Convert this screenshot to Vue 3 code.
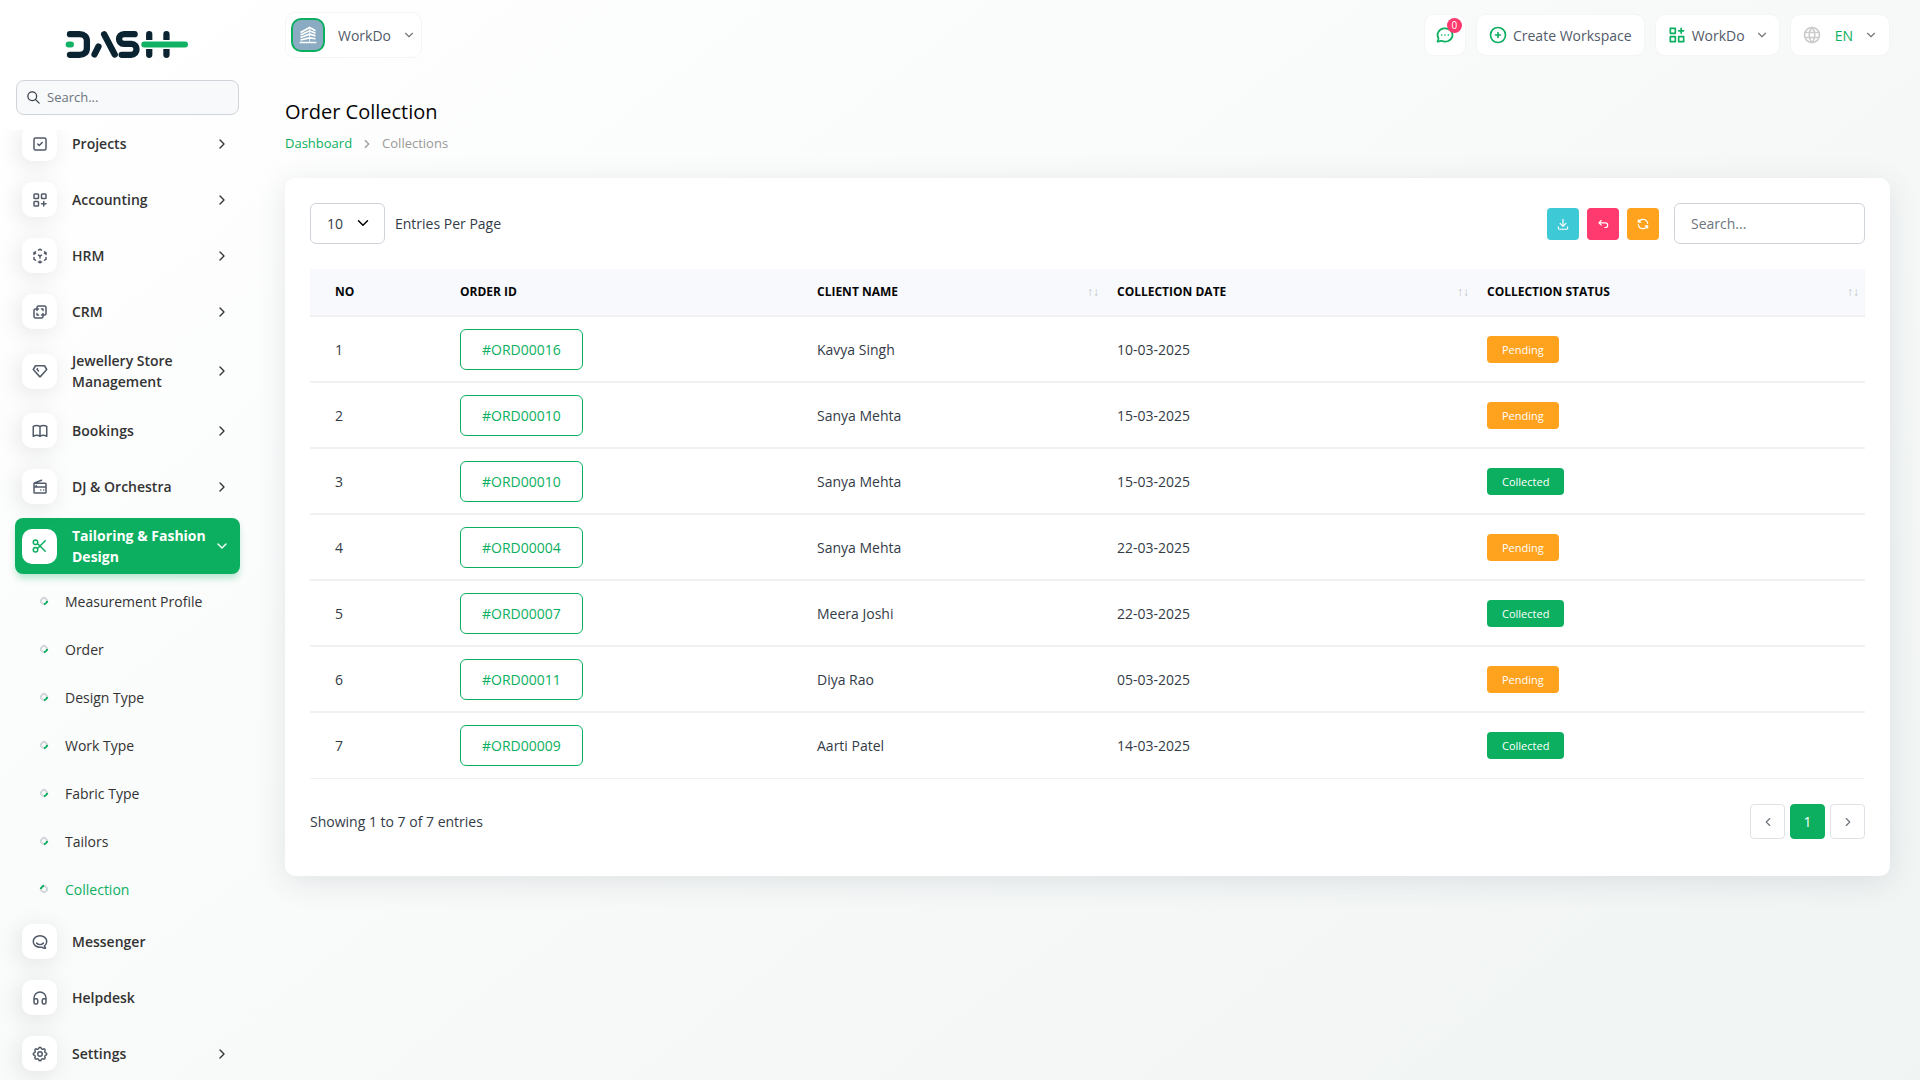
<script setup>
import { ref } from 'vue'

const paths = {
  check: 'M6 4h12a2 2 0 0 1 2 2v12a2 2 0 0 1-2 2H6a2 2 0 0 1-2-2V6a2 2 0 0 1 2-2zM9 12l2 2l4-4',
  apps: 'M5 4h4a1 1 0 0 1 1 1v4a1 1 0 0 1-1 1H5a1 1 0 0 1-1-1V5a1 1 0 0 1 1-1zM15 4h4a1 1 0 0 1 1 1v4a1 1 0 0 1-1 1h-4a1 1 0 0 1-1-1V5a1 1 0 0 1 1-1zM5 14h4a1 1 0 0 1 1 1v4a1 1 0 0 1-1 1H5a1 1 0 0 1-1-1v-4a1 1 0 0 1 1-1zM14 17h6M17 14v6',
  grid: 'M4 4h6v6H4zM4 14h6v6H4zM14 14h6v6h-6zM14 7h6M17 4v6',
  cube: 'M6 17.6l-2-1.1V14M4 10V7.5l2-1.1M10 4.1L12 3l2 1.1M18 6.4l2 1.1V10M20 14v2.5l-2 1.12M14 19.9L12 21l-2-1.1M12 12l2-1.1M18 8.6l2-1.1M12 12v2.5M12 18.5V21M12 12l-2-1.12M6 8.6L4 7.5',
  layers: 'M16 16v2a2 2 0 0 1-2 2H6a2 2 0 0 1-2-2v-8a2 2 0 0 1 2-2h2V6a2 2 0 0 1 2-2h8a2 2 0 0 1 2 2v8a2 2 0 0 1-2 2h-2M10 8H8v2M8 14v2h2M14 8h2v2M16 14v2h-2',
  diamond: 'M6 5h12l3 5l-8.5 9.5a.7.7 0 0 1-1 0L3 10l3-5M10 12L8 9.8l.6-1',
  book: 'M3 19a9 9 0 0 1 9 0a9 9 0 0 1 9 0M3 6a9 9 0 0 1 9 0a9 9 0 0 1 9 0M3 6v13M12 6v13M21 6v13',
  radio: 'M14 3L4.629 6.749A1 1 0 0 0 4 7.677V19a1 1 0 0 0 1 1h14a1 1 0 0 0 1-1V8a1 1 0 0 0-1-1H4.5M4 12h16M7 12v-2M17 16v.01M13 16v.01',
  cut: 'M9 7a3 3 0 1 1-6 0a3 3 0 0 1 6 0zM9 17a3 3 0 1 1-6 0a3 3 0 0 1 6 0zM8.6 8.6L19 19M8.6 15.4L19 5',
  chat: 'M17.802 17.292s.077-.055.2-.149c1.843-1.425 3-3.49 3-5.789c0-4.286-4.03-7.764-9-7.764s-9 3.478-9 7.764c0 4.288 4.03 7.646 9 7.646c.424 0 1.12-.028 2.088-.084c1.262.82 3.104 1.493 4.716 1.493c.499 0 .734-.41.414-.828c-.486-.596-1.156-1.551-1.416-2.29zM7.5 13.5c2.5 2.5 6.5 2.5 9 0',
  headphones: 'M6 13h1a2 2 0 0 1 2 2v3a2 2 0 0 1-2 2H6a2 2 0 0 1-2-2v-3a2 2 0 0 1 2-2zM17 13h1a2 2 0 0 1 2 2v3a2 2 0 0 1-2 2h-1a2 2 0 0 1-2-2v-3a2 2 0 0 1 2-2zM4 15v-3a8 8 0 0 1 16 0v3',
  gear: 'M10.325 4.317c.426-1.756 2.924-1.756 3.35 0a1.724 1.724 0 0 0 2.573 1.066c1.543-.94 3.31.826 2.37 2.37a1.724 1.724 0 0 0 1.065 2.572c1.756.426 1.756 2.924 0 3.35a1.724 1.724 0 0 0-1.066 2.573c.94 1.543-.826 3.31-2.37 2.37a1.724 1.724 0 0 0-2.572 1.065c-.426 1.756-2.924 1.756-3.35 0a1.724 1.724 0 0 0-2.573-1.066c-1.543.94-3.31-.826-2.37-2.37a1.724 1.724 0 0 0-1.065-2.572c-1.756-.426-1.756-2.924 0-3.35a1.724 1.724 0 0 0 1.066-2.573c-.94-1.543.826-3.31 2.37-2.37c1 .608 2.296.07 2.572-1.065zM15 12a3 3 0 1 1-6 0a3 3 0 0 1 6 0z',
  message: 'M3 20l1.3-3.9a9 8 0 1 1 3.4 2.9L3 20M12 12v.01M8 12v.01M16 12v.01',
  plus: 'M21 12a9 9 0 1 1-18 0a9 9 0 0 1 18 0zM9 12h6M12 9v6',
  world: 'M21 12a9 9 0 1 1-18 0a9 9 0 0 1 18 0zM3.6 9h16.8M3.6 15h16.8M11.5 3a17 17 0 0 0 0 18M12.5 3a17 17 0 0 1 0 18',
  download: 'M4 17v2a2 2 0 0 0 2 2h12a2 2 0 0 0 2-2v-2M7 11l5 5l5-5M12 4v12',
  back: 'M9 14l-4-4l4-4M5 10h11a4 4 0 1 1 0 8h-1',
  refresh: 'M20 11A8.1 8.1 0 0 0 4.5 9M4 5v4h4zM4 13a8.1 8.1 0 0 0 15.5 2M20 19v-4h-4z',
  right: 'M9 6l6 6l-6 6',
  left: 'M15 6l-6 6l6 6',
  down: 'M6 9l6 6l6-6',
  search: 'M17 10a7 7 0 1 1-14 0a7 7 0 0 1 14 0zM21 21l-6-6',
}

const menu = [
  { label: 'Projects', icon: 'check', more: true },
  { label: 'Accounting', icon: 'apps', more: true },
  { label: 'HRM', icon: 'cube', more: true },
  { label: 'CRM', icon: 'layers', more: true },
  { label: 'Jewellery Store Management', icon: 'diamond', more: true },
  { label: 'Bookings', icon: 'book', more: true },
  { label: 'DJ & Orchestra', icon: 'radio', more: true },
  {
    label: 'Tailoring & Fashion Design', icon: 'cut', open: true,
    children: ['Measurement Profile', 'Order', 'Design Type', 'Work Type', 'Fabric Type', 'Tailors', 'Collection'],
  },
  { label: 'Messenger', icon: 'chat' },
  { label: 'Helpdesk', icon: 'headphones' },
  { label: 'Settings', icon: 'gear', more: true },
]

const columns = [
  { label: 'No', cls: 'col-no' },
  { label: 'Order ID', cls: 'col-id' },
  { label: 'Client Name', cls: 'col-client', sort: true },
  { label: 'Collection Date', cls: 'col-date', sort: true },
  { label: 'Collection Status', cls: 'col-status', sort: true },
]

const rows = [
  ['#ORD00016', 'Kavya Singh', '10-03-2025', 'Pending'],
  ['#ORD00010', 'Sanya Mehta', '15-03-2025', 'Pending'],
  ['#ORD00010', 'Sanya Mehta', '15-03-2025', 'Collected'],
  ['#ORD00004', 'Sanya Mehta', '22-03-2025', 'Pending'],
  ['#ORD00007', 'Meera Joshi', '22-03-2025', 'Collected'],
  ['#ORD00011', 'Diya Rao', '05-03-2025', 'Pending'],
  ['#ORD00009', 'Aarti Patel', '14-03-2025', 'Collected'],
]

const perPage = ref('10')
</script>

<template>
  <div class="app">
    <aside class="sidebar">
      <a href="#" class="logo" aria-label="Dash">
        <svg viewBox="196 92 374 86" width="124" height="29" fill="none" stroke-linecap="round" stroke-linejoin="round">
          <g stroke="#0b2432" stroke-width="19">
            <path d="M211 104H240C254 104 262 112 262 124V146C262 158 254 166 240 166H211" />
            <path d="M285 165L297 141M314 104L346 165" />
            <path d="M406 104H374C354 104 354 133 374 133H396C417 133 417 166 396 166H367" />
            <path d="M450 104V166M502 104V166" />
          </g>
          <path d="M440 135H516" stroke="#fff" stroke-width="27" stroke-linecap="butt" />
          <path d="M207 135H214M435 135H558" stroke="#12b264" stroke-width="18" />
        </svg>
      </a>
      <label class="side-search">
        <svg class="icon" viewBox="0 0 24 24" width="15" height="15"><path :d="paths.search" /></svg>
        <input type="text" placeholder="Search..." aria-label="Search menu" />
      </label>
      <nav class="menu">
        <ul class="menu-list">
          <li v-for="item in menu" :key="item.label">
            <a href="#" class="menu-link" :class="{ active: item.open }">
              <span class="menu-icon">
                <svg class="icon" viewBox="0 0 24 24" width="18" height="18"><path :d="paths[item.icon]" /></svg>
              </span>
              <span class="menu-label">{{ item.label }}</span>
              <svg v-if="item.more || item.open" class="icon arrow" viewBox="0 0 24 24" width="16" height="16">
                <path :d="item.open ? paths.down : paths.right" />
              </svg>
            </a>
            <ul v-if="item.children" class="submenu">
              <li v-for="child in item.children" :key="child">
                <a href="#" class="sub-link" :class="{ current: child === 'Collection' }"><i class="bullet"></i>{{ child }}</a>
              </li>
            </ul>
          </li>
        </ul>
      </nav>
    </aside>

    <main class="main">
      <header class="topbar">
        <button type="button" class="chip workspace">
          <span class="avatar">
            <svg viewBox="0 0 24 24" width="20" height="20" fill="none" stroke="#fff" stroke-width="2">
              <path d="M3 9L14 3L21 7M3 12L14 7L21 10M3 15L14 11L21 13M3 18L14 15.500L21 16.500M2 21H22" />
              <path d="M14 3V20" stroke-width="1" />
            </svg>
          </span>
          WorkDo
          <svg class="icon chevron" viewBox="0 0 24 24" width="14" height="14"><path :d="paths.down" /></svg>
        </button>
        <div class="actions">
          <button type="button" class="chip messages" aria-label="Messages">
            <svg class="icon green" viewBox="0 0 24 24" width="20" height="20"><path :d="paths.message" /></svg>
            <span class="count">0</span>
          </button>
          <button type="button" class="chip create">
            <svg class="icon green" viewBox="0 0 24 24" width="20" height="20"><path :d="paths.plus" /></svg>
            Create Workspace
          </button>
          <button type="button" class="chip switcher">
            <svg class="icon green" viewBox="0 0 24 24" width="20" height="20"><path :d="paths.grid" /></svg>
            WorkDo
            <svg class="icon chevron" viewBox="0 0 24 24" width="14" height="14"><path :d="paths.down" /></svg>
          </button>
          <button type="button" class="chip lang">
            <svg class="icon globe" viewBox="0 0 24 24" width="20" height="20"><path :d="paths.world" /></svg>
            EN
            <svg class="icon chevron" viewBox="0 0 24 24" width="14" height="14"><path :d="paths.down" /></svg>
          </button>
        </div>
      </header>

      <h1 class="title">Order Collection</h1>
      <nav class="crumbs">
        <a href="#">Dashboard</a>
        <svg class="icon" viewBox="0 0 24 24" width="14" height="14"><path :d="paths.right" /></svg>
        <span>Collections</span>
      </nav>

      <section class="card">
        <div class="toolbar">
          <label class="per-page">
            <span class="select-wrap">
              <select v-model="perPage">
                <option>10</option>
                <option>25</option>
                <option>50</option>
              </select>
              <svg class="icon" viewBox="0 0 24 24" width="18" height="18"><path :d="paths.down" /></svg>
            </span>
            Entries Per Page
          </label>
          <div class="tools">
            <button type="button" class="tool export" aria-label="Export">
              <svg class="icon" viewBox="0 0 24 24" width="14" height="14"><path :d="paths.download" /></svg>
            </button>
            <button type="button" class="tool reset" aria-label="Reset">
              <svg class="icon" viewBox="0 0 24 24" width="14" height="14"><path :d="paths.back" /></svg>
            </button>
            <button type="button" class="tool reload" aria-label="Reload">
              <svg class="icon" viewBox="0 0 24 24" width="14" height="14"><path :d="paths.refresh" /></svg>
            </button>
            <input class="search" type="text" placeholder="Search..." aria-label="Search orders" />
          </div>
        </div>

        <table class="orders">
          <thead>
            <tr>
              <th v-for="col in columns" :key="col.label" :class="col.cls" scope="col">
                <div class="th">{{ col.label }}<span v-if="col.sort" class="sort">↑↓</span></div>
              </th>
            </tr>
          </thead>
          <tbody>
            <tr v-for="(row, i) in rows" :key="i">
              <td>{{ i + 1 }}</td>
              <td><a href="#" class="order-id">{{ row[0] }}</a></td>
              <td>{{ row[1] }}</td>
              <td>{{ row[2] }}</td>
              <td><span class="badge" :class="row[3].toLowerCase()">{{ row[3] }}</span></td>
            </tr>
          </tbody>
        </table>

        <footer class="foot">
          <span>Showing 1 to 7 of 7 entries</span>
          <div class="pager">
            <button type="button" aria-label="Previous">
              <svg class="icon" viewBox="0 0 24 24" width="14" height="14"><path :d="paths.left" /></svg>
            </button>
            <button type="button" class="on">1</button>
            <button type="button" aria-label="Next">
              <svg class="icon" viewBox="0 0 24 24" width="14" height="14"><path :d="paths.right" /></svg>
            </button>
          </div>
        </footer>
      </section>
    </main>
  </div>
</template>

<style>
body {
  background: #fff;
}
</style>

<style scoped>
.app,
.app * {
  box-sizing: border-box;
}
.app {
  display: flex;
  height: 100vh;
  overflow: hidden;
  font: 14px/21px "Open Sans", "Noto Sans", sans-serif;
  color: #333b47;
  background: linear-gradient(142deg, #fff 3%, #f0f4f3 100%);
}
a {
  color: inherit;
  text-decoration: none;
}
ul {
  list-style: none;
  margin: 0;
  padding: 0;
}
button,
input,
select {
  font: inherit;
  color: inherit;
}
button {
  cursor: pointer;
}
.icon {
  display: block;
  flex: none;
  fill: none;
  stroke: currentColor;
  stroke-width: 2;
  stroke-linecap: round;
  stroke-linejoin: round;
}

.sidebar {
  flex: none;
  display: flex;
  flex-direction: column;
  width: 255px;
}
.logo {
  align-self: flex-start;
  margin: 30px 0 21px 65px;
  height: 29px;
}
.side-search {
  display: flex;
  align-items: center;
  gap: 6px;
  height: 35px;
  margin: 0 16px;
  padding: 0 9px;
  border: 1px solid #ced4da;
  border-radius: 8px;
  background: #f8f9fa;
}
.side-search input {
  flex: 1;
  min-width: 0;
  padding: 0;
  border: 0;
  outline: 0;
  background: none;
  font-size: 13px;
}
input::placeholder {
  color: #6c757d;
  opacity: 1;
}
.menu {
  flex: 1;
  min-height: 0;
  margin-top: 15px;
  overflow: hidden;
}
.menu-list {
  margin-top: -15px;
}
.menu-link {
  display: flex;
  align-items: center;
  margin: 0 15px;
  padding: 7px;
  border-radius: 8px;
  color: #333;
  font-weight: 600;
}
.menu-list > li {
  padding: 4px 0 3px;
}
.menu-icon {
  display: grid;
  place-items: center;
  flex: none;
  width: 35px;
  height: 35px;
  margin-right: 15px;
  border-radius: 10px;
  background: #fff;
  box-shadow: -3px 4px 23px rgba(0, 0, 0, 0.1);
  color: #525b69;
}
.menu-label {
  flex: 1;
}
.arrow {
  margin-right: 3px;
}
.menu-link.active {
  background: #0caf60;
  box-shadow: 0 5px 7px -1px rgba(12, 175, 96, 0.3);
  color: #fff;
  font-weight: 700;
}
.active .menu-icon {
  color: #0caf60;
  box-shadow: none;
}
.submenu {
  margin: 3px 0 -3px;
}
.sub-link {
  display: flex;
  align-items: center;
  height: 48px;
  padding-left: 40px;
  color: #333;
  font-weight: 500;
}
.bullet {
  width: 8px;
  height: 8px;
  margin-right: 17px;
  border: 2px solid #d2d6d9;
  border-right-color: #0caf60;
  border-radius: 50%;
  transform: rotate(45deg);
}
.current {
  color: #0caf60;
}
.current .bullet {
  transform: rotate(225deg);
}

.main {
  flex: 1;
  min-width: 0;
  padding: 12px 30px 0;
}
.topbar {
  display: flex;
  justify-content: space-between;
  align-items: center;
}
.chip {
  display: flex;
  align-items: center;
  height: 42px;
  padding: 0 10px;
  border: 1px solid #f4f6f6;
  border-radius: 10px;
  background: #fff;
  color: #525b69;
}
.workspace {
  height: 46px;
  padding: 0 5px;
}
.avatar {
  display: grid;
  place-items: center;
  width: 34px;
  height: 34px;
  margin-right: 13px;
  border: 2px solid #0caf60;
  border-radius: 10px;
  background: #8aabc2;
}
.chevron {
  margin-left: 11px;
  color: #777;
}
.actions {
  display: flex;
  gap: 10px;
}
.messages {
  position: relative;
}
.count {
  position: absolute;
  top: 3px;
  right: 3px;
  width: 15px;
  border-radius: 8px;
  background: #ff3a6e;
  color: #fff;
  font-size: 10px;
  line-height: 15px;
}
.green {
  color: #0caf60;
}
.create,
.switcher {
  gap: 5px;
}
.create {
  padding: 0 12px 0 11px;
}
.switcher {
  padding-left: 11px;
}
.switcher .chevron {
  margin-left: 5px;
}
.lang {
  padding: 0 11px;
  color: #0caf60;
}
.globe {
  margin-right: 13px;
  color: #ccc;
}
.title {
  margin: 39px 0 6px;
  color: #060606;
  font-size: 20px;
  font-weight: 500;
  line-height: 30px;
}
.crumbs {
  display: flex;
  align-items: center;
  gap: 8px;
  color: #999;
  font-size: 13px;
}
.crumbs a {
  color: #0caf60;
}
.card {
  margin-top: 24px;
  padding: 25px 25px 37px;
  border-radius: 10px;
  background: #fff;
  box-shadow: 0 6px 30px rgba(55, 65, 81, 0.12);
}
.toolbar {
  display: flex;
  justify-content: space-between;
  align-items: center;
  margin-bottom: 25px;
}
.per-page {
  display: flex;
  align-items: center;
  gap: 10px;
}
.select-wrap {
  position: relative;
}
select {
  display: block;
  width: 75px;
  height: 41px;
  padding: 0 16px;
  border: 1px solid #ced4da;
  border-radius: 6px;
  background: #fff;
  appearance: none;
}
.select-wrap .icon {
  position: absolute;
  top: 11px;
  right: 13px;
  color: #000;
  pointer-events: none;
}
.tools {
  display: flex;
  align-items: center;
  gap: 8px;
}
.tool {
  display: grid;
  place-items: center;
  width: 32px;
  height: 32px;
  padding: 0;
  border: 0;
  border-radius: 4px;
  color: #fff;
}
.export {
  background: #3ec9d6;
}
.reset {
  background: #ff3a6e;
}
.reload {
  background: #ffa21d;
}
.search {
  width: 191px;
  height: 41px;
  margin-left: 7px;
  padding: 0 16px;
  border: 1px solid #ced4da;
  border-radius: 6px;
  background: #fff;
}
.orders {
  width: 100%;
  border-collapse: separate;
  border-spacing: 0;
  table-layout: fixed;
}
.col-no {
  width: 138px;
}
.col-id {
  width: 357px;
}
.col-client {
  width: 300px;
}
.col-date {
  width: 370px;
}
.col-status {
  width: 390px;
}
th {
  height: 48px;
  padding: 0 6px 2px 12px;
  border-bottom: 2px solid #f1f1f1;
  background: #f8f9fd;
  color: #060606;
  font-size: 12px;
  font-weight: 700;
  text-align: left;
  text-transform: uppercase;
}
.th {
  display: flex;
  justify-content: space-between;
}
.sort {
  color: #c3c5c8;
  font-weight: 400;
}
td {
  height: 66px;
  padding: 0 12px;
  border-bottom: 2px solid #f1f1f1;
}
tbody tr:last-child td {
  border-bottom-width: 1px;
}
th:first-child,
td:first-child {
  padding-left: 25px;
}
.order-id {
  display: inline-block;
  padding: 9px 21px;
  border: 1px solid #0caf60;
  border-radius: 6px;
  color: #0caf60;
}
.badge {
  display: inline-block;
  padding: 6px 15px;
  border-radius: 4px;
  color: #fff;
  font-size: 11px;
  line-height: 15px;
  vertical-align: middle;
}
.pending {
  background: #ffa21d;
}
.collected {
  background: #0caf60;
}
.foot {
  display: flex;
  justify-content: space-between;
  align-items: center;
  margin-top: 25px;
}
.pager {
  display: flex;
  gap: 5px;
}
.pager button {
  display: grid;
  place-items: center;
  width: 35px;
  height: 35px;
  padding: 0;
  border: 1px solid #dee2e6;
  border-radius: 4px;
  background: #fff;
  color: #6c757d;
}
.pager .on {
  border-color: #0caf60;
  background: #0caf60;
  color: #fff;
}
</style>
